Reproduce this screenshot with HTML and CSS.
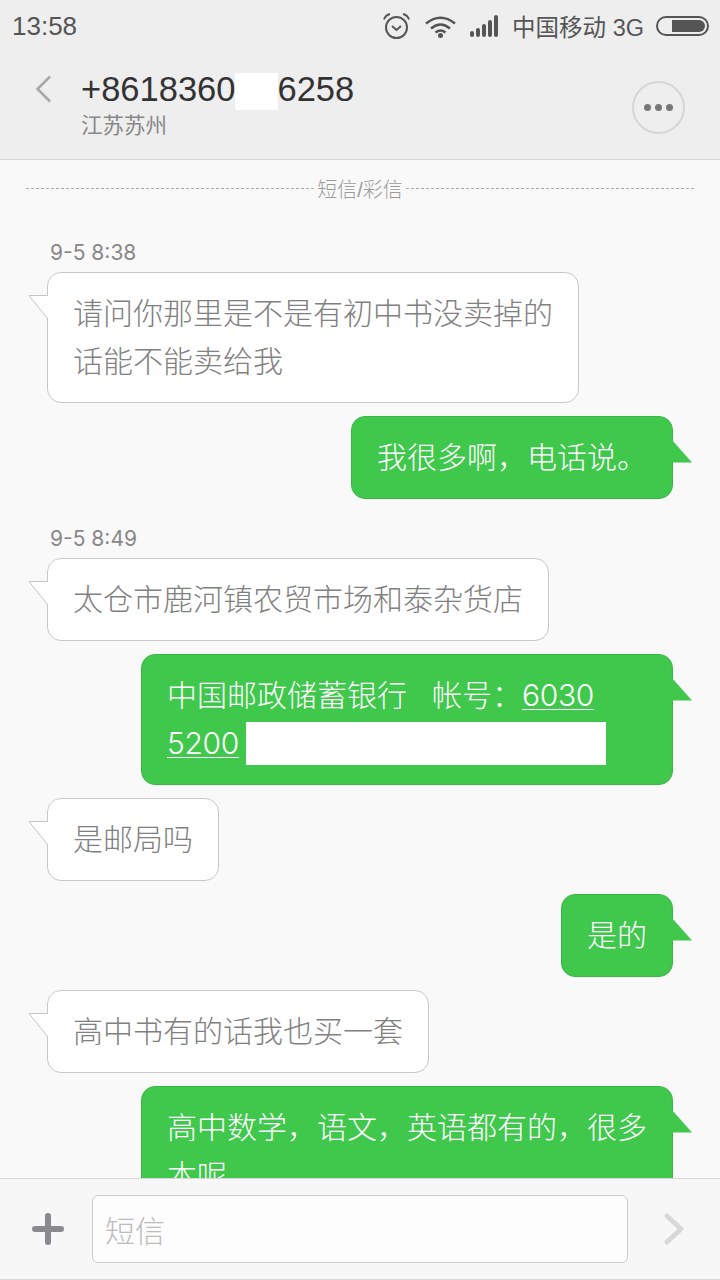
FILE: index.html
```html
<!doctype html>
<html lang="zh-CN">
<head>
    <meta charset="UTF-8">
    <meta name="viewport" content="width=device-width, initial-scale=1.0">
    <title>短信</title>
    <link rel="stylesheet" href="styles.css">
</head>
<body>
    <header class="top">
        <div class="status">
            <span class="clock">13:58</span>
            <div class="status-right">
                <svg class="ico-alarm" width="27" height="26" viewBox="0 0 27 26">
                    <circle cx="13.5" cy="14.5" r="10.5" fill="none" stroke="#555" stroke-width="2"/>
                    <path d="M9 13l4.5 4 4.5-4" fill="none" stroke="#555" stroke-width="2"/>
                    <path d="M1 6.500Q2.500 2 7 1M26 6.500Q24.500 2 20 1" fill="none" stroke="#555" stroke-width="2"/>
                </svg>
                <svg class="ico-wifi" width="31" height="23" viewBox="0 0 31 23">
                    <path d="M1 8.500Q15.500-3 30 8.500M6 13.500Q15.500 5.500 25 13.500M10.500 17.500Q15.500 13.500 20.500 17.500" fill="none" stroke="#555" stroke-width="2.600"/>
                    <circle cx="15.500" cy="20.500" r="2.500" fill="#555"/>
                </svg>
                <svg class="ico-signal" width="28" height="22" viewBox="0 0 28 22">
                    <rect x="0" y="16" width="4" height="6" rx="2" fill="#555"/>
                    <rect x="6" y="13" width="4" height="9" rx="2" fill="#555"/>
                    <rect x="12" y="9" width="4" height="13" rx="2" fill="#555"/>
                    <rect x="18" y="5" width="4" height="17" rx="2" fill="#555"/>
                    <rect x="24" y="0" width="4" height="22" rx="2" fill="#555"/>
                </svg>
                <span class="carrier">中国移动 3G</span>
                <div class="battery"><div class="battery-fill"></div></div>
            </div>
        </div>
        <div class="bar">
            <svg class="ico-back" width="17" height="28" viewBox="0 0 17 28">
                <path d="M15 1.500L2.500 14 15 26.500" fill="none" stroke="#a8a8a8" stroke-width="2.500"/>
            </svg>
            <div class="contact">
                <div class="number">+8618360<span class="hide-num"></span>6258</div>
                <div class="place">江苏苏州</div>
            </div>
            <div class="more"><i></i><i></i><i></i></div>
        </div>
    </header>

    <main class="list">
        <div class="sep"><span>短信/彩信</span></div>

        <div class="time">9-5 8:38</div>
        <div class="msg in">
            <svg class="tail" width="20" height="26" viewBox="0 0 20 26"><path d="M20 .5H1L20 24" fill="#fff" stroke="#c4c4c4"/></svg>
            请问你那里是不是有初中书没卖掉的话能不能卖给我
        </div>
        <div class="msg out">
            <svg class="tail" width="20" height="24" viewBox="0 0 20 24"><path d="M0 0L20 22.500H0Z" fill="#40c84d"/></svg>
            我很多啊，电话说。
        </div>

        <div class="time">9-5 8:49</div>
        <div class="msg in">
            <svg class="tail" width="20" height="26" viewBox="0 0 20 26"><path d="M20 .5H1L20 24" fill="#fff" stroke="#c4c4c4"/></svg>
            太仓市鹿河镇农贸市场和泰杂货店
        </div>
        <div class="msg out">
            <svg class="tail" width="20" height="24" viewBox="0 0 20 24"><path d="M0 0L20 22.500H0Z" fill="#40c84d"/></svg>
            中国邮政储蓄银行&nbsp;&nbsp;&nbsp;帐号：<a class="acct" href="#">6030 5200</a> <span class="hide-acct"></span>
        </div>
        <div class="msg in">
            <svg class="tail" width="20" height="26" viewBox="0 0 20 26"><path d="M20 .5H1L20 24" fill="#fff" stroke="#c4c4c4"/></svg>
            是邮局吗
        </div>
        <div class="msg out">
            <svg class="tail" width="20" height="24" viewBox="0 0 20 24"><path d="M0 0L20 22.500H0Z" fill="#40c84d"/></svg>
            是的
        </div>
        <div class="msg in">
            <svg class="tail" width="20" height="26" viewBox="0 0 20 26"><path d="M20 .5H1L20 24" fill="#fff" stroke="#c4c4c4"/></svg>
            高中书有的话我也买一套
        </div>
        <div class="msg out">
            <svg class="tail" width="20" height="24" viewBox="0 0 20 24"><path d="M0 0L20 22.500H0Z" fill="#40c84d"/></svg>
            高中数学，语文，英语都有的，很多本呢
        </div>
    </main>

    <footer class="compose">
        <svg class="ico-plus" width="32" height="32" viewBox="0 0 32 32">
            <path d="M16 3V29M3 16H29" fill="none" stroke="#8a8a8e" stroke-width="6" stroke-linecap="round"/>
        </svg>
        <div class="input">短信</div>
        <svg class="ico-send" width="20" height="32" viewBox="0 0 20 32">
            <path d="M3 3L17 16 3 29" fill="none" stroke="#d8d8d8" stroke-width="5" stroke-linecap="round" stroke-linejoin="round"/>
        </svg>
    </footer>
</body>
</html>
```

FILE: styles.css
```css
html , body
{
    margin : 0px ;
    padding : 0px ;
    width : 100% ;
    height : 100% ;
}
body
{
    display : flex ;
    flex-direction : column ;
    height : 1280px ;
    overflow : hidden ;
    background : #f9f9f9 ;
    font-family : "Liberation Sans" , "Noto Sans CJK SC" , sans-serif ;
    font-weight : 300 ;
}

/* top */
.top
{
    flex : none ;
    height : 160px ;
    box-sizing : border-box ;
    background : #eeeeee ;
    border-bottom : 1px solid #d8d8d8 ;
}
.status
{
    display : flex ;
    align-items : center ;
    justify-content : space-between ;
    height : 52px ;
    padding : 0 11px 0 12px ;
    color : #555555 ;
}
.clock
{
    font-size : 26px ;
}
.status-right
{
    display : flex ;
    align-items : center ;
}
.ico-wifi
{
    margin-left : 15px ;
}
.ico-signal
{
    margin-left : 14px ;
}
.carrier
{
    margin-left : 14px ;
    font-size : 23.5px ;
    font-weight : 400 ;
}
.battery
{
    box-sizing : border-box ;
    width : 53px ;
    height : 20px ;
    margin-left : 12px ;
    padding : 2px 2px 2px 14px ;
    border : 2px solid #555555 ;
    border-radius : 10px ;
}
.battery-fill
{
    height : 100% ;
    background : #555555 ;
    border-radius : 0 6px 6px 0 ;
}
.bar
{
    display : flex ;
    align-items : flex-start ;
    height : 107px ;
    padding : 0 35px 0 35px ;
}
.ico-back
{
    margin-top : 23px ;
}
.contact
{
    flex : 1 ;
    margin-left : 29px ;
    padding-top : 15px ;
}
.number
{
    height : 44px ;
    line-height : 44px ;
    font-size : 34.500px ;
    color : #333333 ;
    white-space : nowrap ;
}
.hide-num
{
    display : inline-block ;
    width : 43px ;
    height : 37px ;
    margin-right : -1px ;
    background : #ffffff ;
    vertical-align : middle ;
}
.place
{
    line-height : 30px ;
    font-size : 21.500px ;
    font-weight : 400 ;
    color : #888888 ;
}
.more
{
    box-sizing : border-box ;
    display : flex ;
    align-items : center ;
    justify-content : center ;
    gap : 4px ;
    width : 53px ;
    height : 53px ;
    margin-top : 29px ;
    border : 2px solid #d6d6d6 ;
    border-radius : 50% ;
}
.more i
{
    width : 7px ;
    height : 7px ;
    background : #777777 ;
    border-radius : 50% ;
}

/* message list */
.list
{
    flex : 1 ;
    min-height : 0 ;
    overflow : hidden ;
    display : flex ;
    flex-direction : column ;
    gap : 13px ;
}
.sep
{
    flex : none ;
    display : flex ;
    align-items : center ;
    gap : 3px ;
    height : 26px ;
    margin : 17px 26px 10px 26px ;
    font-size : 20px ;
    line-height : 26px ;
    color : #999999 ;
}
.sep:before , .sep:after
{
    content : "" ;
    flex : 1 ;
    margin-top : -3px ;
    border-top : 1px dashed #aaaaaa ;
}
.time
{
    flex : none ;
    height : 28px ;
    padding : 13px 0 0 50px ;
    margin-bottom : -8px ;
    line-height : 28px ;
    font-family : Inter , "Liberation Sans" , sans-serif ;
    font-size : 21px ;
    font-weight : 400 ;
    color : #888888 ;
}
.msg
{
    flex : none ;
    position : relative ;
    box-sizing : border-box ;
    max-width : 532px ;
    padding : 16.500px 25px ;
    border : 1px solid #c8c8c8 ;
    border-radius : 14px ;
    font-size : 30px ;
    line-height : 48px ;
}
.msg.in
{
    align-self : flex-start ;
    margin-left : 47px ;
    background : #ffffff ;
    color : #808080 ;
}
.msg.out
{
    align-self : flex-end ;
    margin-right : 47px ;
    background : #40c84d ;
    border-color : #3ab648 ;
    color : #ffffff ;
}
.tail
{
    position : absolute ;
    top : 22px ;
}
.in .tail
{
    left : -20px ;
}
.out .tail
{
    right : -20px ;
    top : 23px ;
}
.acct
{
    color : #ffffff ;
    font-family : Inter , "Liberation Sans" , sans-serif ;
    font-weight : 300 ;
    line-height : 1 ;
    letter-spacing : -0.300px ;
    text-decoration-thickness : 1px ;
    text-underline-offset : 3px ;
}
.hide-acct
{
    display : inline-block ;
    width : 360px ;
    height : 43px ;
    margin : 2px 0 0 -1px ;
    background : #ffffff ;
    vertical-align : top ;
}

/* bottom */
.compose
{
    flex : none ;
    position : relative ;
    z-index : 1 ;
    display : flex ;
    align-items : center ;
    box-sizing : border-box ;
    height : 102px ;
    padding : 0 36px 0 32px ;
    background : #f7f7f7 ;
    border-top : 1px solid #d8d8d8 ;
    border-bottom : 1px solid #d8d8d8 ;
}
.input
{
    flex : 1 ;
    box-sizing : border-box ;
    height : 68px ;
    margin : 0 36px 0 28px ;
    padding-left : 12px ;
    background : #fdfdfd ;
    border : 1px solid #cccccc ;
    border-radius : 6px ;
    line-height : 72px ;
    font-size : 30px ;
    color : #bbbbbb ;
}
```
